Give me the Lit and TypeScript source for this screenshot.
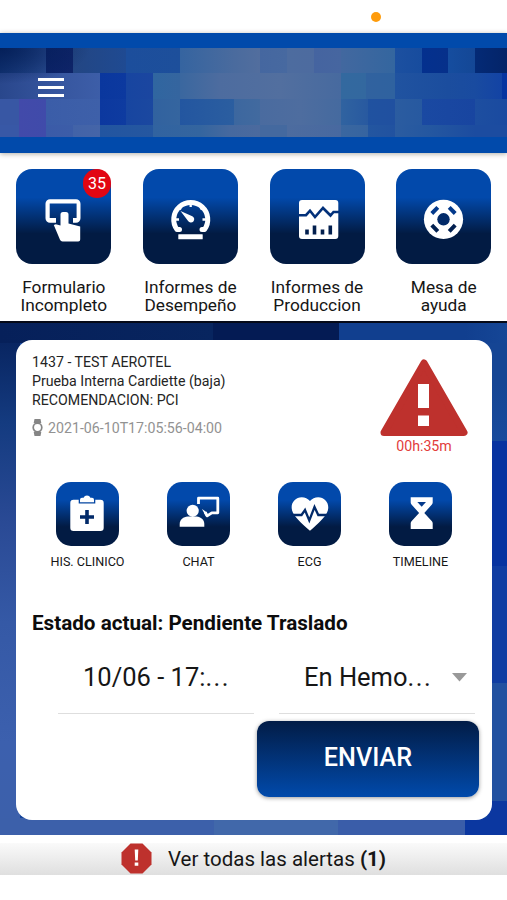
import { LitElement, html, css, svg } from "lit";
import { customElement } from "lit/decorators.js";

const ICONS: Record<string, unknown> = {
  form: svg`
    <path d="M40 53.7H34a4.5 4.5 0 0 1-4.5-4.5V34.8A4.5 4.5 0 0 1 34 30.3h26a4.5 4.5 0 0 1 4.5 4.5v14.4a4.5 4.5 0 0 1-4.5 4.5h-3V49h3.6V34.5H33.7V49H40z"/>
    <path d="M44.5 45.5a2.5 2.5 0 0 1 2.500-2.500h3a2.500 2.500 0 0 1 2.500 2.500v9l11.700 3v13a2 2 0 0 1-2 2H46.500a3 3 0 0 1-2.500-1.700L37.800 56l2-.8 4.700 1.300z"/>`,
  gauge: svg`
    <path d="M36.500 60.500h-2.500A17 17 0 1 1 61.500 60.500h-2.500" fill="none" stroke="#fff" stroke-width="5" stroke-linecap="round" stroke-linejoin="round"/>
    <path d="M47.700 32v6M35 37.500l3 3M60.500 37.500l-3 3M30 50.500h6M65.500 50.500h-6" fill="none" stroke="#fff" stroke-width="2.300"/>
    <path d="M37.500 42l11.800 5.200a3.300 3.300 0 1 1-4.200 4.700z"/>
    <rect x="35.300" y="65.300" width="24.400" height="5" rx=".5"/>`,
  chart: svg`
    <rect x="29" y="31" width="39.300" height="39" rx="3"/>
    <path d="M28.500 46.200h7.500l4-4.500 5 6.300 8-9 7.500 7.500 3-3.500h5.500" fill="none" stroke="#03317a" stroke-width="2.600"/>
    <path d="M37 65.500v-5M44.500 65.500v-9M52.500 65.500v-5M60.300 65.500v-9" fill="none" stroke="#021f4e" stroke-width="3.600"/>`,
  help: svg`
    <circle cx="47.500" cy="50.300" r="19.600"/>
    <circle cx="47.500" cy="50.300" r="6.200" fill="#022a69"/>
    <path d="M35.800 44.500l6-6.200M59.200 44.500l-6-6.200" fill="none" stroke="#03398b" stroke-width="4"/>
    <path d="M35.800 56.100l6 6.200M59.200 56.100l-6 6.200" fill="none" stroke="#022050" stroke-width="4"/>`,
  clinic: svg`
    <path d="M17.500 17.800h5.200v3.700h16.600v-3.700h5.200a3.200 3.200 0 0 1 3.200 3.200v24.800a3.200 3.200 0 0 1-3.200 3.200h-27a3.200 3.200 0 0 1-3.200-3.200V21a3.200 3.200 0 0 1 3.200-3.200z"/>
    <path d="M24 20.300v-2.500a2 2 0 0 1 2-2h1.600a3.600 3.600 0 0 1 6.800 0H36a2 2 0 0 1 2 2v2.500z"/>
    <path d="M31 28v14M24 35h14" fill="none" stroke="#022a69" stroke-width="3.600"/>`,
  chat: svg`
    <circle cx="25.700" cy="28.800" r="6.100"/>
    <path d="M12.700 44.700V42c0-4.700 3.700-7 8-7.500h9c4 .5 7.600 3 7.600 7.500v2.700z"/>
    <path d="M31.500 22v-5.800h19.300v14.600h-6l-4.600 3-2-3.500" fill="none" stroke="#fff" stroke-width="2.800" stroke-linejoin="round"/>
    <path d="M35 27l5 3.500-.5 5z"/>`,
  ecg: svg`
    <path transform="translate(10 9.800) scale(1.830)" d="M12 21.350l-1.450-1.320C5.400 15.360 2 12.280 2 8.500 2 5.420 4.420 3 7.500 3c1.740 0 3.410.81 4.500 2.090C13.090 3.810 14.760 3 16.500 3 19.580 3 22 5.420 22 8.500c0 3.780-3.400 6.860-8.550 11.540z"/>
    <path d="M13 33h10.500l3.500-5 4.300 10.500 5.200-13.500 3.800 8H51" fill="none" stroke="#022a69" stroke-width="2.300"/>`,
  time: svg`
    <path d="M21.700 15.300h22v5.200a3 3 0 0 1-.8 2L35.300 31l7.600 8.200a3 3 0 0 1 .8 2V47h-22v-5.800a3 3 0 0 1 .8-2L30.100 31l-7.600-8.500a3 3 0 0 1-.8-2z"/>
    <path d="M28.300 20h8.700l-4.300 4.700z" fill="#03398b"/>`,
};

const MENU = [
  { icon: "form", a: "Formulario", b: "Incompleto", badge: "35" },
  { icon: "gauge", a: "Informes de", b: "Desempeño" },
  { icon: "chart", a: "Informes de", b: "Produccion" },
  { icon: "help", a: "Mesa de", b: "ayuda" },
];
const ACTIONS = [
  { icon: "clinic", label: "HIS. CLINICO" },
  { icon: "chat", label: "CHAT" },
  { icon: "ecg", label: "ECG" },
  { icon: "time", label: "TIMELINE" },
];

@customElement("app-root")
export class AppRoot extends LitElement {
  static styles = css`
    :host { display: flex; flex-direction: column; width: 507px; height: 900px; background: #fff; color: #161616; font-family: Roboto, sans-serif; overflow: hidden; }
    * { box-sizing: border-box; }
    svg { display: block; flex: none; }
    .status { height: 33px; flex: none; display: flex; justify-content: flex-end; padding: 12px 126px 0 0; }
    .dot { width: 10px; height: 10px; border-radius: 50%; background: #fe9b0b; }
    header { height: 120px; flex: none; background: #014aab; padding: 15px 0 16px; display: grid; box-shadow: 0 1px 5px rgba(60,50,30,.4); z-index: 1; }
    header > * { grid-area: 1 / 1; }
    .mosaic { display: grid; grid-template-rows: 25px 26px 26px 12px; }
    .m1 { background: linear-gradient(90deg, #123474, #284a8e 46px, #0c2368 46px, #0e2468 73px, #234683 73px, #1f4a92 126px, #1c4e9c 126px, #1d4f9b 180px, #3564a0 180px, #4a6b9e 234px, #526e9e 260px, #4567a0 260px, #4769a0 287px, #4d6c9f 287px, #4d6b9f 314px, #4564a0 314px, #4666a0 341px, #42689f 341px, #34669f 395px, #1c50a0 395px, #174c9e 422px, #04308e 422px, #06308a 448px, #154d9f 448px, #144796 475px, #042a76 475px, #042468); }
    .m2 { background: linear-gradient(90deg, #29478c, #35549d 50px, #3d5ea8 100px, #0a379e 100px, #0c399f 126px, #1745a0 126px, #1b46a0 153px, #3066a0 153px, #35659f 180px, #3a679f 180px, #4d6c9f 220px, #526f9f 280px, #476a9f 341px, #33699f 341px, #33689f 366px, #31629f 366px, #2f629f 395px, #2053a0 395px, #1b4d9e 448px, #194ba0 475px, #1343a4 502px, #0634a0 502px); }
    .m3 { background: linear-gradient(90deg, #3857a4 19px, #424aaa 19px, #404baa 46px, #3b5da8 46px, #3e60a9 100px, #0c389f 100px, #0e3ba0 126px, #1745a0 126px, #1b48a0 153px, #31629f 153px, #35659f 180px, #2356a0 180px, #2b5ea0 234px, #3c679f 234px, #426a9f 260px, #4a6b9f 260px, #4e6d9f 300px, #456a9f 341px, #3063a0 341px, #2859a0 368px, #2052a0 368px, #2050a0 395px, #2b5ca0 395px, #2759a0 422px, #1a49a2 422px, #1845a0 475px, #1d4ea0 475px, #1a4aa0); }
    .m4 { background: linear-gradient(90deg, #3858a6 19px, #424aaa 19px, #404baa 46px, #3b5ba8 46px, #3c5da8 73px, #4263a8 73px, #4565a8 100px, #2255a0 100px, #2557a0 153px, #3163a0 153px, #34659f 200px, #46699f 230px, #4b6a9e 260px, #44699f 260px, #44699f 287px, #4d6c9f 287px, #4869a0 341px, #3a67a0 341px, #3664a0 368px, #2356a0 368px, #2152a0 395px, #2b5ca0 395px, #2457a0 430px, #1c4ca0 475px, #1c4ca0); }
    .shade { background: radial-gradient(90px 36px at 0 0, rgba(2,28,84,.85), rgba(2,28,84,0)); }
    .burger { margin: 30px 0 0 37.500px; width: 26.500px; height: 19px; display: flex; flex-direction: column; justify-content: space-between; }
    .burger i { height: 3.200px; background: #fff; }
    .menu { height: 168px; flex: none; display: grid; grid-template-columns: repeat(4, 1fr); padding: 16px 0 0 .5px; }
    .item { display: flex; flex-direction: column; align-items: center; font-size: 17.300px; line-height: 17.500px; text-align: center; }
    .tile { position: relative; width: 95px; height: 95px; border-radius: 16px; background: linear-gradient(#0249ab 30%, #021b43 68%); margin-bottom: 15px; }
    .tile svg, .act svg { fill: #fff; }
    .badge { position: absolute; right: 0; top: 0; width: 28.500px; height: 28.500px; border-radius: 50%; background: #e20613; color: #fff; font-size: 16px; line-height: 29px; }
    main { height: 514px; flex: none; border-top: 2px solid #060a18; padding: 17px 15.500px 0 16px;
      background: linear-gradient(90deg, #3c60aa 0 214px, #4168aa 214px 338px, #3a5da9 338px 465px, #0b37a0 465px) 0 100% / 100% 17px no-repeat,
        linear-gradient(90deg, #06205a, #08255f 213px, #041b54 213px 339px, #113f8f 339px 465px, #154696) 0 0 / 100% 20px no-repeat,
        linear-gradient(#154594 0 60px, #174a9c 118px, #0733a0 118px 243px, #103da2 243px 360px, #2251a0 360px 478px, #0b37a0 478px) 100% 0 / 20px 100% no-repeat,
        linear-gradient(#06205a, #143b80 100px, #2a4a95 200px, #3559a6 300px, #3c60ae 420px, #3c60aa) 0 0 / 20px 100% no-repeat, #14449a; }
    .card { height: 479.500px; border-radius: 16px; background: #fff; display: flex; flex-direction: column; padding: 12px 12.500px 0 16px; }
    .top { display: flex; justify-content: space-between; height: 130px; }
    .info { font-size: 14.200px; line-height: 19px; color: #242424; padding-top: .6px; }
    .when { display: flex; align-items: center; gap: 5px; margin-top: 9px; color: #929292; }
    .when svg { margin-top: -2px; }
    .alert { width: 88px; margin: 7px 11px 0 0; display: flex; flex-direction: column; align-items: center; color: #e23b3b; font-size: 14.200px; line-height: 19px; }
    .acts { display: grid; grid-template-columns: repeat(4, 111px); height: 128.500px; }
    .act { display: flex; flex-direction: column; align-items: center; font-size: 12.600px; line-height: 14px; gap: 9px; }
    .act span { width: 63px; height: 63.500px; border-radius: 15px; background: linear-gradient(#0249ab 28%, #021b43 70%); }
    .state { font-weight: 700; font-size: 20.650px; line-height: 24px; height: 34.500px; color: #0c0c0c; }
    .fields { display: flex; gap: 25px; padding-left: 26px; height: 69px; font-size: 25.500px; }
    .field { width: 196px; border-bottom: 1.500px solid #dedede; display: flex; align-items: center; padding: 0 8px 4px 25px; justify-content: space-between; white-space: nowrap; }
    .dots { letter-spacing: 1.500px; }
    .send { align-self: flex-end; margin-top: 6.500px; width: 222px; height: 76px; border: 0; border-radius: 12px; background: linear-gradient(#021c46, #014aab); box-shadow: 0 1px 4px rgba(0,0,0,.4); color: #fff; font: 500 25.200px/74px Roboto, sans-serif; padding: 0 0 2px; }
    footer { height: 31.500px; margin-top: 8px; flex: none; background: linear-gradient(#fafafa, #dfdfdf); display: flex; align-items: center; padding-left: 121px; gap: 16px; font-size: 20.500px; }
    b { font-weight: 700; }
  `;

  render() {
    return html`
      <div class="status"><div class="dot"></div></div>
      <header>
        <div class="mosaic"><div class="m1"></div><div class="m2"></div><div class="m3"></div><div class="m4"></div></div>
        <div class="shade"></div>
        <div class="burger"><i></i><i></i><i></i></div>
      </header>
      <nav class="menu">
        ${MENU.map((m) => html`<div class="item">
          <div class="tile"><svg width="95" height="95" viewBox="0 0 95 95">${ICONS[m.icon]}</svg>${m.badge ? html`<div class="badge">${m.badge}</div>` : ""}</div>
          <div>${m.a}<br>${m.b}</div>
        </div>`)}
      </nav>
      <main>
        <section class="card">
          <div class="top">
            <div class="info">
              <div>1437 - TEST AEROTEL</div>
              <div>Prueba Interna Cardiette (baja)</div>
              <div>RECOMENDACION: PCI</div>
              <div class="when">
                <svg width="11" height="17" viewBox="0 0 11 17"><path d="M2.500 0h6l.8 4H1.700zM2.500 17h6l.8-4H1.700z" fill="#858585"/><circle cx="5.500" cy="8.500" r="4.300" fill="#fff" stroke="#858585" stroke-width="1.700"/></svg>
                <div>2021-06-10T17:05:56-04:00</div>
              </div>
            </div>
            <div class="alert">
              <svg width="88" height="78" viewBox="0 0 88 78"><path d="M44 4L84 73.500H4z" fill="#be312d" stroke="#be312d" stroke-width="7" stroke-linejoin="round"/><path d="M38 25h11v24H38zM38 56.500h11V67H38z" fill="#fff"/></svg>
              <div>00h:35m</div>
            </div>
          </div>
          <div class="acts">
            ${ACTIONS.map((a) => html`<div class="act"><span><svg width="63" height="63" viewBox="0 0 63 63">${ICONS[a.icon]}</svg></span><div>${a.label}</div></div>`)}
          </div>
          <div class="state">Estado actual: Pendiente Traslado</div>
          <div class="fields">
            <div class="field"><div>10/06 - 17:<span class="dots">...</span></div></div>
            <div class="field"><div>En Hemo<span class="dots">...</span></div><svg width="15" height="9" viewBox="0 0 15 9"><path d="M0 0h15L7.500 8.500z" fill="#999"/></svg></div>
          </div>
          <button class="send">ENVIAR</button>
        </section>
      </main>
      <footer>
        <svg width="31" height="31" viewBox="0 0 31 31"><path d="M9.500.5h12l9 9v12l-9 9h-12l-9-9v-12z" fill="#be312d"/><path d="M13.700 6.500h3.600l-.5 11h-2.600zM13.700 19.500h3.600v3.300h-3.600z" fill="#fff"/></svg>
        <div>Ver todas las alertas <b>(1)</b></div>
      </footer>
    `;
  }
}
